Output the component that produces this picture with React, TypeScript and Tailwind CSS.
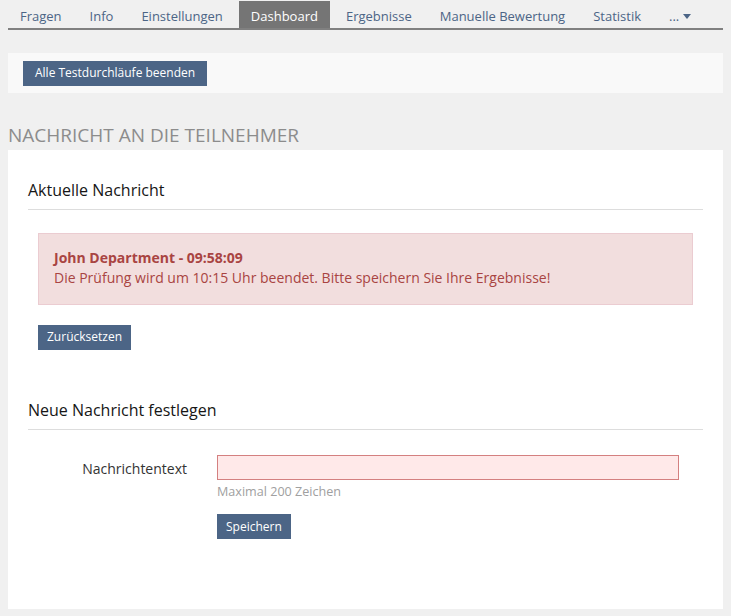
import React from 'react';

const tabs = ['Fragen', 'Info', 'Einstellungen', 'Dashboard', 'Ergebnisse', 'Manuelle Bewertung', 'Statistik'];

export default function App() {
  return (
    <div className="min-h-[616px] bg-[#f0f0f0] px-2 pt-px pb-[7px] text-[#161616]" style={{ fontFamily: '"Open Sans", sans-serif' }}>
      {/* tabs */}
      <div className="flex items-stretch gap-1 border-b-2 border-[#808080] h-[29px] text-[13px]">
        {tabs.map(t => (
          <div key={t}
            className={t === 'Dashboard'
              ? 'px-3 pt-[4px] flex items-center bg-[#757575] text-white'
              : 'px-3 pt-[4px] flex items-center text-[#4c6586]'}>
            {t}
          </div>
        ))}
        <div className="px-3 pt-[4px] flex items-center text-[#4c6586] gap-1">
          <span>...</span>
          <svg width="8" height="5" viewBox="0 0 8 5"><path d="M0 0h8L4 5z" fill="#4c6586" /></svg>
        </div>
      </div>

      {/* toolbar */}
      <div className="mt-[23px] bg-[#f9f9f9] h-[40px] flex items-center px-[15px]">
        <button className="bg-[#4c6586] text-white text-[12px] h-[25px] px-[12px] leading-none">Alle Testdurchläufe beenden</button>
      </div>

      <h1 className="mt-[28px] text-[19px] leading-[29px] text-[#8c8c8c] uppercase font-normal">Nachricht an die Teilnehmer</h1>

      <div className="bg-white px-5 pt-[28px] pb-[70px]">
        <h2 className="text-[16px] leading-[24px] pb-[7px] border-b border-[#dddddd]">Aktuelle Nachricht</h2>
        <div className="mx-[10px] mt-[23px] bg-[#f2dede] border border-[#ebccd1] text-[#a94442] text-[14px] leading-[20px] px-[15px] pt-[14px] pb-[16px]">
          <div className="font-bold">John Department - 09:58:09</div>
          <div>Die Prüfung wird um 10:15 Uhr beendet. Bitte speichern Sie Ihre Ergebnisse!</div>
        </div>
        <div className="mx-[10px] mt-[18px]">
          <button className="bg-[#4c6586] text-white text-[12px] h-[25px] px-[9px] leading-none">Zurücksetzen</button>
        </div>

        <h2 className="mt-[48px] text-[16px] leading-[24px] pb-[7px] border-b border-[#dddddd]">Neue Nachricht festlegen</h2>

        <div className="mt-[25px] flex">
          <label className="w-[159px] text-right text-[14px] leading-[25px] text-[#333] pt-[1px]">Nachrichtentext</label>
          <div className="ml-[30px] flex flex-col">
            <div className="w-[462px] h-[25px] bg-[#ffe9e9] border border-[#d48080]" />
            <div className="mt-[3px] text-[12.6px] leading-[18px] text-[#a0a0a0]">Maximal 200 Zeichen</div>
            <div className="mt-[12px]">
              <button className="bg-[#4c6586] text-white text-[12px] h-[25px] px-[9px] leading-none">Speichern</button>
            </div>
          </div>
        </div>
      </div>
    </div>
  );
}
